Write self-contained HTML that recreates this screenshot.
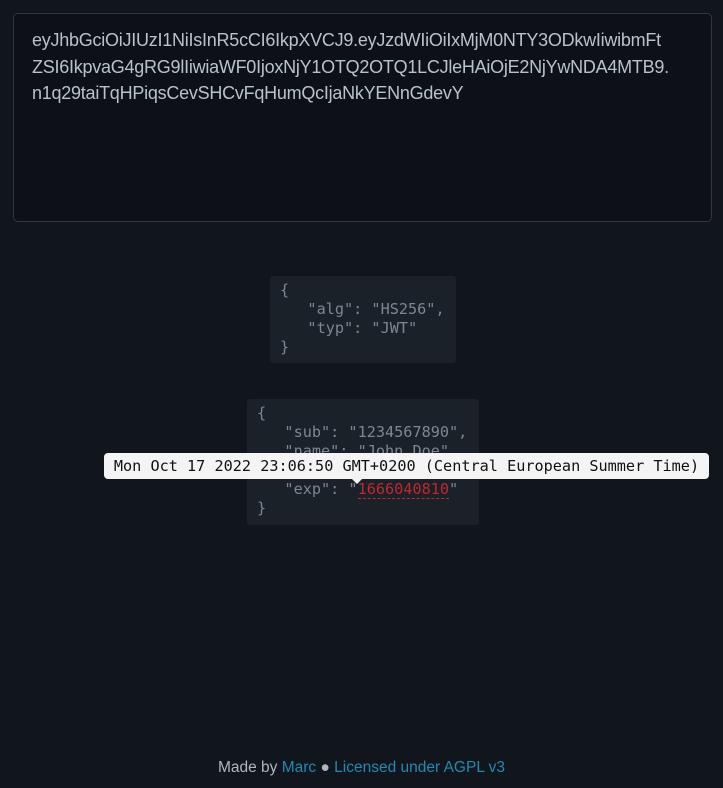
<!DOCTYPE html>
<html><head><meta charset="utf-8"><style>
body{margin:0;background:#11161d;width:723px;height:788px;position:relative;overflow:hidden;font-family:"Liberation Sans",sans-serif}
.ta{position:absolute;left:13px;top:13px;width:697px;height:207px;background:#0d1117;border:1px solid #30363d;border-radius:5px}
.ta div{position:absolute;left:18px;top:13px;color:#b8c2cc;font-size:18px;line-height:26.5px;letter-spacing:-0.25px;white-space:pre}
.box{position:absolute;background:#1a2129;border-radius:3px;font-family:"DejaVu Sans Mono",monospace;font-size:15.2px;line-height:19px;color:#7d8791;white-space:pre;padding:5px 10px}
.tip{position:absolute;left:104px;top:453px;width:605px;height:26px;background:#f4f4f4;border-radius:4px;font-family:"DejaVu Sans Mono",monospace;font-size:15.2px;line-height:26px;color:#111;text-align:center}
.tip:after{content:"";position:absolute;left:248px;top:26px;border:5px solid transparent;border-top-color:#f4f4f4}
.red{color:#c0282c;border-bottom:1px dashed #c0282c}
.foot{position:absolute;top:759px;left:0;width:723px;text-align:center;color:#aeb6bf;font-size:15.5px}
.foot a{color:#1f8ab5;text-decoration:none}
</style></head><body>
<div class="ta"><div>eyJhbGciOiJIUzI1NiIsInR5cCI6IkpXVCJ9.eyJzdWIiOiIxMjM0NTY3ODkwIiwibmFt
ZSI6IkpvaG4gRG9lIiwiaWF0IjoxNjY1OTQ2OTQ1LCJleHAiOjE2NjYwNDA4MTB9.
n1q29taiTqHPiqsCevSHCvFqHumQcIjaNkYENnGdevY</div></div>
<div class="box" style="left:270px;top:276px;width:166px;height:77px">{
   "alg": "HS256",
   "typ": "JWT"
}</div>
<div class="box" style="left:247px;top:399px;width:212px;height:116px">{
   "sub": "1234567890",
   "name": "John Doe",
   "iat": "1665946945",
   "exp": "<span class="red">1666040810</span>"
}</div>
<div class="tip">Mon Oct 17 2022 23:06:50 GMT+0200 (Central European Summer Time)</div>
<div class="foot">Made by <a>Marc</a> ● <a>Licensed under AGPL v3</a></div>
</body></html>
